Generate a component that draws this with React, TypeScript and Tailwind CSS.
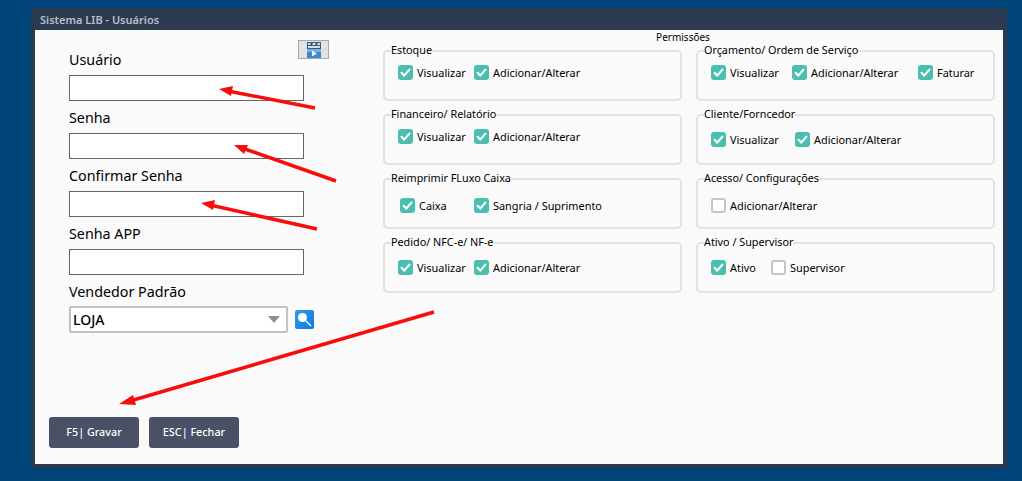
import React from "react";

const font = { fontFamily: '"Noto Sans", "Open Sans", sans-serif' };

function Check({ on = true, cls = "" }: { on?: boolean; cls?: string }) {
  return (
    <span className={`flex h-[15px] w-[15px] shrink-0 items-center justify-center rounded-[3px] ${on ? "bg-[#4abfb0]" : "border-2 border-[#c2c6ca] bg-white"} ${cls}`}>
      {on && (
        <svg width="13" height="13" viewBox="0 0 13 13" fill="none">
          <path d="M2.6 6.8 5.2 9.6 10.4 3.6" stroke="#fff" strokeWidth="2.2" strokeLinecap="round" strokeLinejoin="round" />
        </svg>
      )}
    </span>
  );
}

function Opt({ label, on = true, w }: { label: string; on?: boolean; w: string }) {
  return (
    <label className={`flex items-center gap-[4px] ${w}`}>
      <Check on={on} />
      <span className="whitespace-nowrap text-[10.9px] leading-[15px] text-black">{label}</span>
    </label>
  );
}

function Group({ title, pad, children }: { title: string; pad: string; children: React.ReactNode }) {
  return (
    <fieldset className="h-[57px] min-w-0 rounded-[5px] border-2 border-[#dfe3e6] pl-[6px]">
      <legend className="h-[14px] whitespace-nowrap px-0 text-[10.8px] leading-[12px] text-black">{title}</legend>
      <div className={`flex items-center ${pad}`}>{children}</div>
    </fieldset>
  );
}

function Field({ label, mb, gap }: { label: string; mb: string; gap: string }) {
  return (
    <div className={mb}>
      <div className={`h-[18px] text-[14.3px] leading-[18px] text-black ${gap}`}>{label}</div>
      <input className="block h-[26px] w-[235px] border border-[#666] bg-white outline-none" />
    </div>
  );
}

export default function App() {
  return (
    <div className="relative h-[481px] w-[1022px] overflow-hidden bg-[#00457a] pl-[31px] pt-[8px]" style={font}>
      <div className="flex h-[460px] w-[976px] flex-col border-x-4 border-b-4 border-[#2c3a50] bg-[#2c3a50]">
        <div className="h-[22px] pl-[5px] pt-[3px] text-[11px] font-semibold leading-[18px] text-[#b7c0ca]">Sistema LIB - Usuários</div>
        <div className="flex flex-1 flex-col bg-[#fafafa]">
          <div className="flex flex-1">
            <div className="ml-[34px] w-[260px] pt-[21px]">
              <div className="mb-[6px] flex h-[18px] items-center justify-between">
                <span className="text-[14.3px] leading-[18px] text-black">Usuário</span>
                <button className="mb-[21px] flex h-[19px] w-[31px] shrink-0 items-center justify-center border border-[#aaa] bg-[#e2e2e2]">
                  <svg width="14" height="16" viewBox="0 0 14 16">
                    <rect x="0" y="0" width="14" height="7" fill="#3a5a80" />
                    <path d="M1 1h3l-1 2H1zM6 1h3L8 3H5zM11 1h2v2h-3zM1 4h12v2H1z" fill="#d5dde6" />
                    <rect x="0" y="7" width="14" height="9" fill="#3d86cc" />
                    <rect x="0" y="7" width="14" height="3" fill="#79aee0" />
                    <path d="M5 8.500 10 11.500 5 14.500z" fill="#eef6ff" />
                  </svg>
                </button>
              </div>
              <input className="mb-[8px] block h-[26px] w-[235px] border border-[#666] bg-white outline-none" />
              <Field label="Senha" mb="mb-[8px]" gap="mb-[6px]" />
              <Field label="Confirmar Senha" mb="mb-[8px]" gap="mb-[6px]" />
              <Field label="Senha APP" mb="mb-[8px]" gap="mb-[6px]" />
              <div className="mb-[5px] h-[18px] text-[14.3px] leading-[18px] text-black">Vendedor Padrão</div>
              <div className="flex items-center gap-[7px]">
                <div className="flex h-[27px] w-[219px] items-center justify-between rounded-[2px] border-2 border-[#bfc3c8] bg-white pl-[2px] pr-[6px]">
                  <span className="text-[14px] font-medium leading-[18px] text-black">LOJA</span>
                  <svg width="12" height="7" viewBox="0 0 12 7"><path d="M0 0h12L6 7z" fill="#8a8f98" /></svg>
                </div>
                <div className="flex h-[19px] w-[19px] items-center justify-center rounded-[2px] bg-gradient-to-br from-[#2f9bf2] to-[#0f78d6]">
                  <svg width="17" height="17" viewBox="0 0 17 17" fill="none">
                    <circle cx="6.500" cy="6.500" r="4.500" fill="#fff" />
                    <path d="M10 10 15 15" stroke="#fff" strokeWidth="1.600" />
                  </svg>
                </div>
              </div>
            </div>
            <div className="ml-[54px] w-[612px]">
              <div className="h-[14px] pr-[12px] text-center text-[10px] leading-[14px] text-black">Permissões</div>
              <div className="grid grid-cols-[299px_299px] gap-x-[14px] gap-y-[7px]">
                <Group title="Estoque" pad="pt-[7px]">
                  <Opt label="Visualizar" w="w-[76px] ml-[7px]" />
                  <Opt label="Adicionar/Alterar" w="" />
                </Group>
                <Group title="Orçamento/ Ordem de Serviço" pad="pt-[7px]">
                  <Opt label="Visualizar" w="w-[81px] ml-[7px]" />
                  <Opt label="Adicionar/Alterar" w="w-[126px]" />
                  <Opt label="Faturar" w="" />
                </Group>
                <Group title="Financeiro/ Relatório" pad="pt-[7px]">
                  <Opt label="Visualizar" w="w-[76px] ml-[7px]" />
                  <Opt label="Adicionar/Alterar" w="" />
                </Group>
                <Group title="Cliente/Forncedor" pad="pt-[10px]">
                  <Opt label="Visualizar" w="w-[84px] ml-[7px]" />
                  <Opt label="Adicionar/Alterar" w="" />
                </Group>
                <Group title="Reimprimir FLuxo Caixa" pad="pt-[12px]">
                  <Opt label="Caixa" w="w-[74px] ml-[9px]" />
                  <Opt label="Sangria / Suprimento" w="" />
                </Group>
                <Group title="Acesso/ Configurações" pad="pt-[12px]">
                  <Opt label="Adicionar/Alterar" on={false} w="ml-[7px]" />
                </Group>
                <Group title="Pedido/ NFC-e/ NF-e" pad="pt-[10px]">
                  <Opt label="Visualizar" w="w-[76px] ml-[7px]" />
                  <Opt label="Adicionar/Alterar" w="" />
                </Group>
                <Group title="Ativo / Supervisor" pad="pt-[10px]">
                  <Opt label="Ativo" w="w-[60px] ml-[7px]" />
                  <Opt label="Supervisor" on={false} w="" />
                </Group>
              </div>
            </div>
          </div>
          <div className="flex gap-[10px] pb-[16px] pl-[14px]">
            <button className="h-[31px] w-[90px] rounded-[3px] bg-[#4a5066] text-[10.8px] font-medium text-white">F5| Gravar</button>
            <button className="h-[31px] w-[90px] rounded-[3px] bg-[#4a5066] text-[10.8px] font-medium text-white">ESC| Fechar</button>
          </div>
        </div>
      </div>
      <svg className="pointer-events-none absolute left-0 top-0" width="1022" height="481" fill="none">
        <g stroke="#f80d0d" strokeWidth="3.5">
          <path d="M315 108 228 91" />
          <path d="M336 181 242 148" />
          <path d="M317 229 210 205" />
          <path d="M434 312 130 401" />
        </g>
        <g fill="#f80d0d">
          <path d="M219 89 233 86 231 96z" />
          <path d="M234 145 248 145 244 154z" />
          <path d="M201 203 215 200 213 210z" />
          <path d="M119 404 133 395 136 405z" />
        </g>
      </svg>
    </div>
  );
}
